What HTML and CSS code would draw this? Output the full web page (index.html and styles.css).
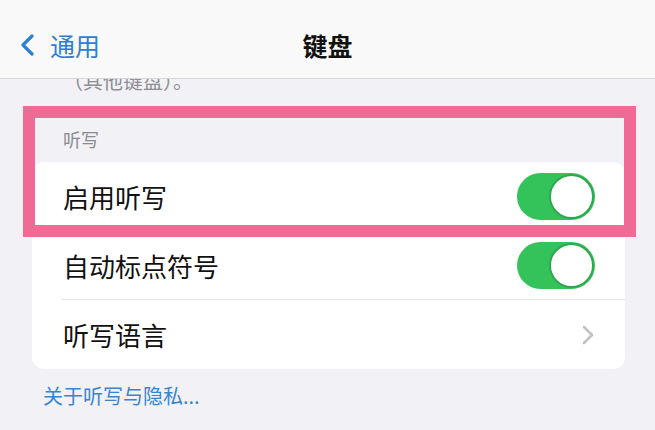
FILE: index.html
```html
<!DOCTYPE html>
<html lang="zh-CN">
<head>
<meta charset="utf-8">
<title>键盘</title>
<link rel="stylesheet" href="styles.css">
</head>
<body>
<div class="screen">
  <header class="nav">
    <div class="back">
      <svg class="back-icon" width="14" height="22" viewBox="0 0 14 22"><path d="M12 2 L3 11 L12 20" fill="none" stroke="#2d7fd3" stroke-width="3.2" stroke-linecap="round" stroke-linejoin="round"/></svg>
      <span class="back-label">通用</span>
    </div>
    <div class="title">键盘</div>
    <div class="nav-spacer"></div>
  </header>
  <main class="scroll">
    <p class="prev-footer">（其他键盘）。</p>
    <div class="section-header">听写</div>
    <div class="card">
      <div class="row">
        <span class="row-label">启用听写</span>
        <span class="toggle"><span class="knob"></span></span>
      </div>
      <div class="row">
        <span class="row-label">自动标点符号</span>
        <span class="toggle"><span class="knob"></span></span>
      </div>
      <div class="row last">
        <span class="row-label">听写语言</span>
        <svg class="chevron" width="14" height="20" viewBox="0 0 14 20"><path d="M3 2 L11 10 L3 18" fill="none" stroke="#c2c2c6" stroke-width="2.6" stroke-linecap="round" stroke-linejoin="round"/></svg>
      </div>
    </div>
    <a class="link">关于听写与隐私...</a>
    <div class="highlight"></div>
  </main>
</div>
</body>
</html>
```
FILE: styles.css
```css
* { box-sizing: border-box; }
html, body { margin: 0; padding: 0; }
body {
  width: 655px;
  height: 430px;
  overflow: hidden;
  background: #f2f2f6;
  font-family: "Noto Sans CJK SC", "Noto Sans", sans-serif;
}
.screen { display: flex; flex-direction: column; height: 430px; }
.nav {
  height: 79px;
  flex: none;
  background: #f9f9f9;
  border-bottom: 1px solid #d6d6d8;
  display: grid;
  grid-template-columns: 1fr auto 1fr;
  align-items: center;
  padding-top: 12px;
}
.back { display: flex; align-items: center; padding-left: 20px; gap: 16px; }
.back-icon { display: block; }
.back-label { font-size: 25px; color: #2d7fd3; line-height: 30px; }
.title { font-size: 25px; font-weight: 700; color: #111; line-height: 30px; }
.scroll {
  flex: 1;
  overflow: hidden;
  position: relative;
}
.prev-footer {
  margin: -10px 0 0;
  padding-left: 63px;
  font-size: 20px;
  line-height: 24px;
  color: #8d8d92;
}
.section-header {
  margin-top: 34px;
  padding-left: 63px;
  font-size: 18px;
  line-height: 24px;
  color: #8a8a8f;
}
.card {
  margin: 11px 30px 0 32px;
  background: #fff;
  border-radius: 12px;
  overflow: hidden;
}
.row {
  height: 69px;
  display: flex;
  align-items: center;
  justify-content: space-between;
  padding: 0 30px 0 31px;
  position: relative;
}
.row::after {
  content: "";
  position: absolute;
  left: 30px;
  right: 0;
  bottom: 0;
  height: 1px;
  background: #e3e3e6;
}
.row.last::after { display: none; }
.row-label { font-size: 26px; color: #111; line-height: 32px; }
.toggle {
  width: 78px;
  height: 47px;
  border-radius: 24px;
  background: #34c35a;
  display: flex;
  justify-content: flex-end;
  align-items: center;
  padding-right: 1px;
}
.knob {
  width: 45px;
  height: 45px;
  border-radius: 50%;
  background: #fff;
  border: 2px solid #2ea84f;
}
.chevron { display: block; }
.link {
  display: block;
  margin-top: 15px;
  padding-left: 43px;
  font-size: 20px;
  line-height: 24px;
  color: #3984cf;
}
.highlight {
  position: absolute;
  left: 23px;
  top: 27px;
  width: 613px;
  height: 131px;
  border: 12px solid #ef6b96;
  pointer-events: none;
}
```
